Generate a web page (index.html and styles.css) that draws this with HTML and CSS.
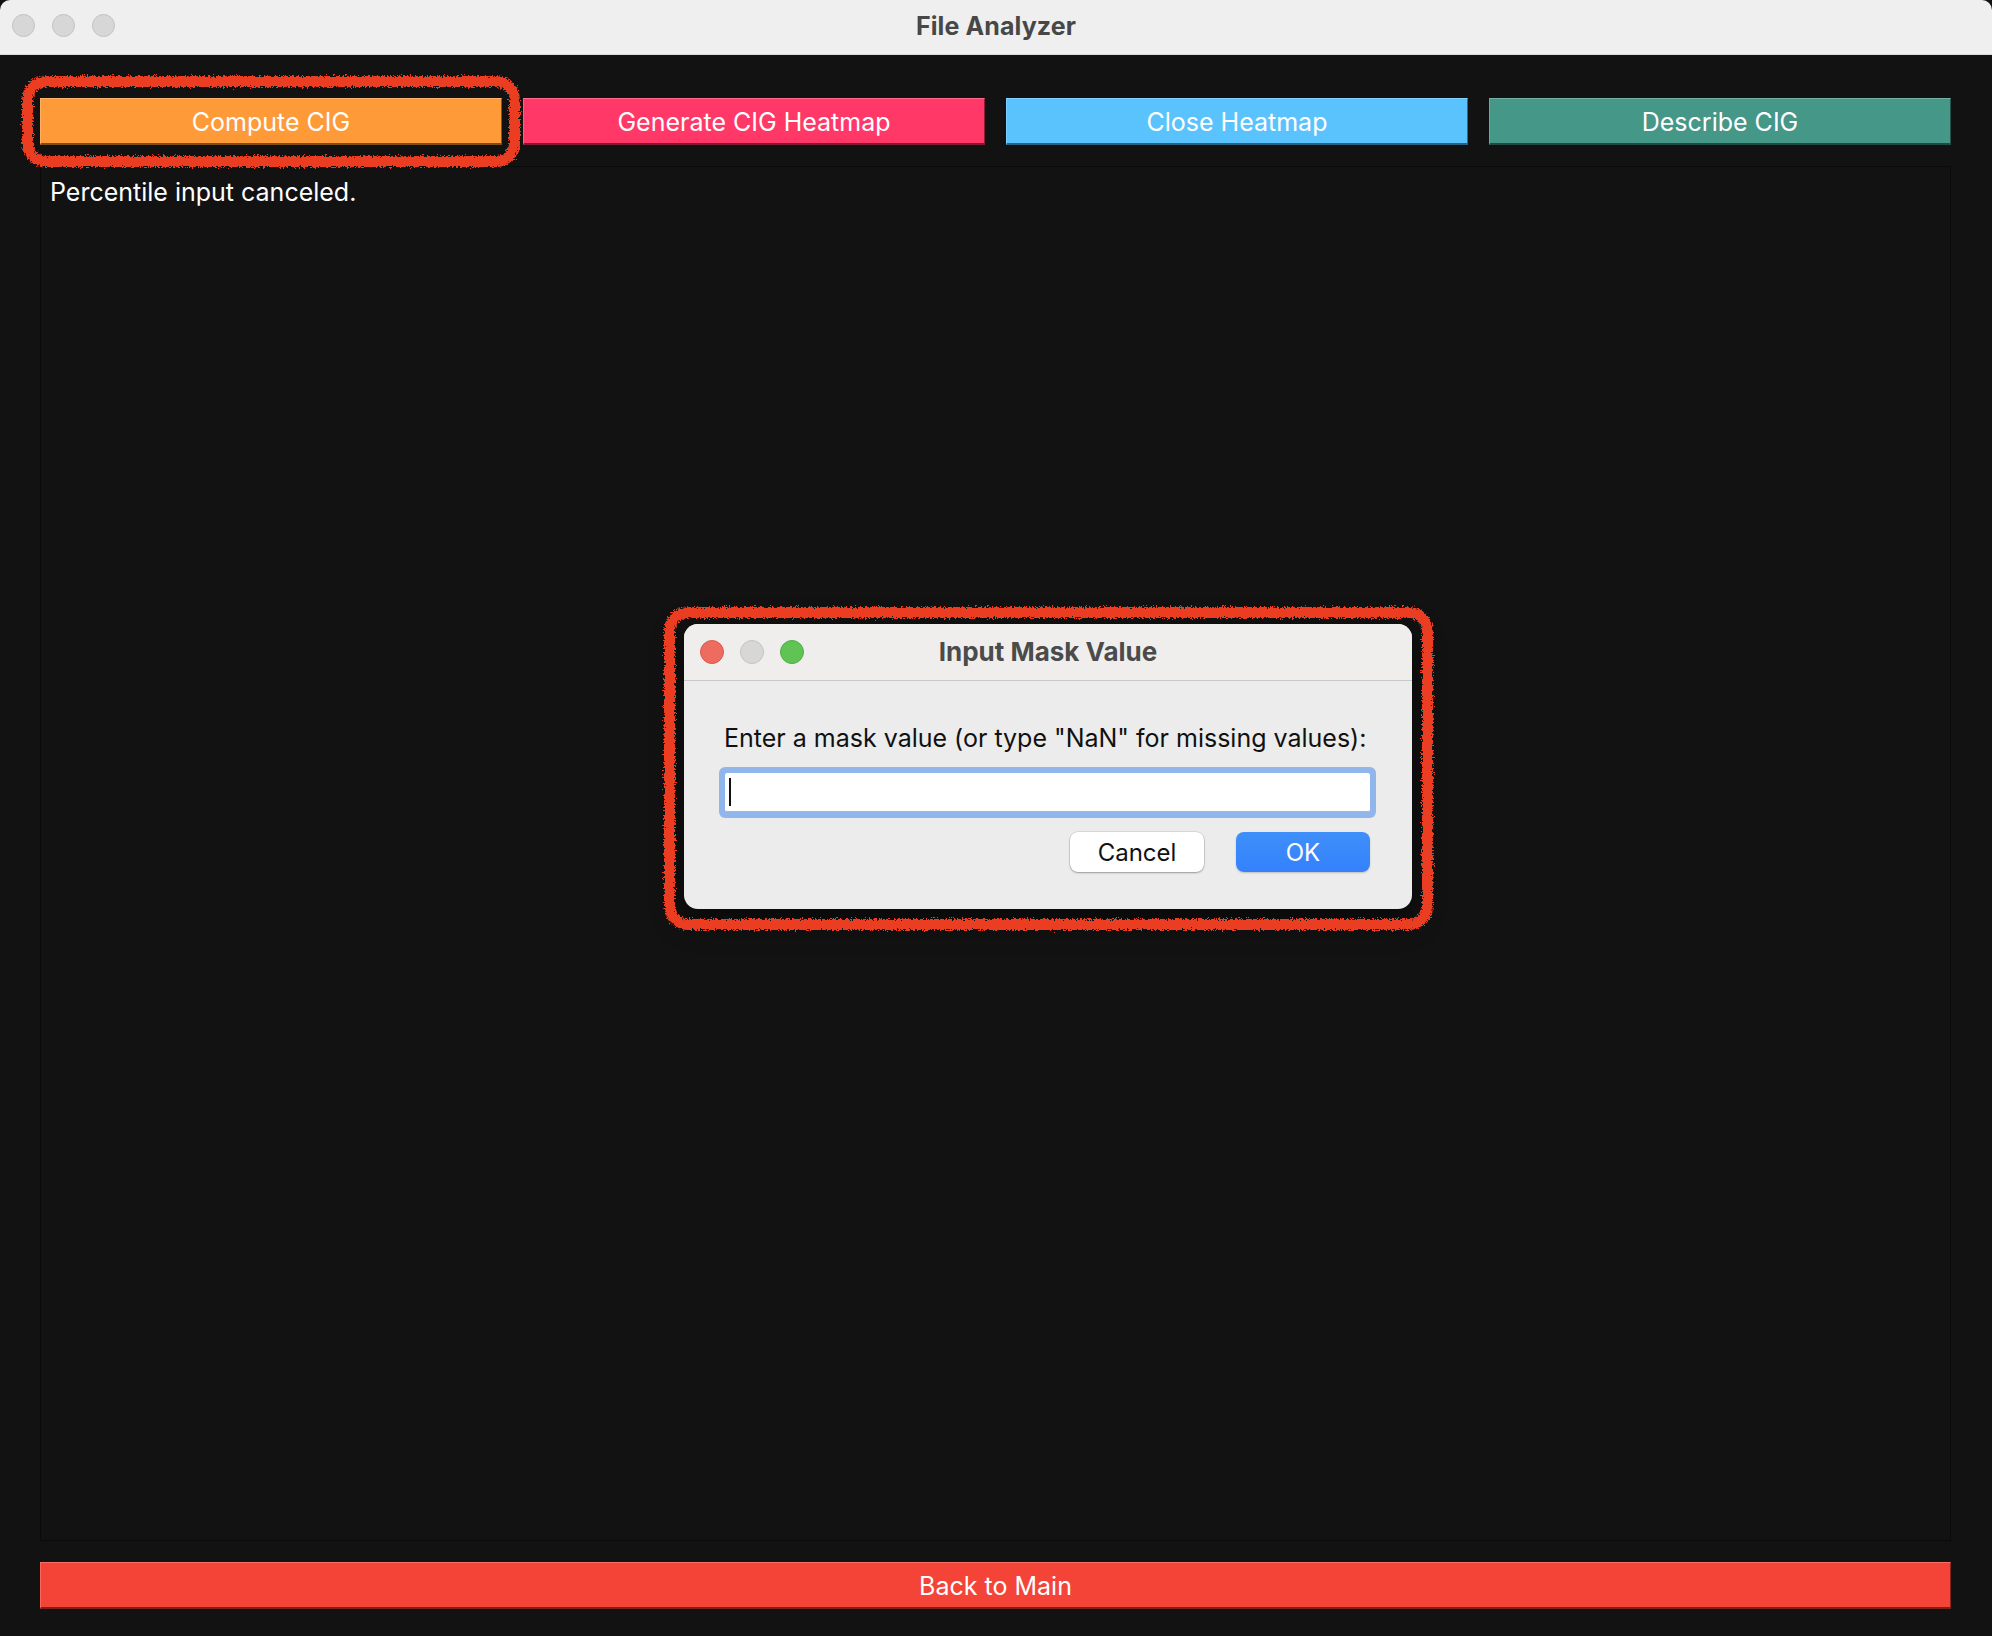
FILE: index.html
```html
<!DOCTYPE html>
<html lang="en">
<head>
<meta charset="utf-8">
<title>File Analyzer</title>
<link rel="stylesheet" href="styles.css">
</head>
<body>
<svg class="defs" width="0" height="0" aria-hidden="true">
  <filter id="rough" x="-10%" y="-10%" width="120%" height="120%">
    <feTurbulence type="fractalNoise" baseFrequency="0.6" numOctaves="2" seed="3" result="noise"/>
    <feDisplacementMap in="SourceGraphic" in2="noise" scale="7" xChannelSelector="R" yChannelSelector="G"/>
  </filter>
</svg>
<div class="window">
  <header class="titlebar">
    <div class="lights">
      <span class="light gray"></span>
      <span class="light gray"></span>
      <span class="light gray"></span>
    </div>
    <div class="title">File Analyzer</div>
  </header>
  <main class="content">
    <div class="toolbar">
      <button class="btn orange">Compute CIG</button>
      <button class="btn pink">Generate CIG Heatmap</button>
      <button class="btn sky">Close Heatmap</button>
      <button class="btn teal">Describe CIG</button>
    </div>
    <div class="panel">
      <p class="status">Percentile input canceled.</p>
    </div>
    <button class="btn back">Back to Main</button>
  </main>

  <div class="dialog">
    <div class="dlg-titlebar">
      <div class="lights dlg-lights">
        <span class="light red"></span>
        <span class="light gray"></span>
        <span class="light green"></span>
      </div>
      <div class="dlg-title">Input Mask Value</div>
    </div>
    <div class="dlg-body">
      <div class="dlg-label">Enter a mask value (or type "NaN" for missing values):</div>
      <div class="dlg-input"><span class="caret"></span></div>
      <div class="dlg-actions">
        <button class="mac-btn cancel">Cancel</button>
        <button class="mac-btn ok">OK</button>
      </div>
    </div>
  </div>

  <div class="annot annot-compute"></div>
  <div class="annot annot-dialog"></div>
</div>
</body>
</html>
```

FILE: styles.css
```css
* { box-sizing: border-box; }

html, body {
  margin: 0;
  padding: 0;
  background: #121212;
}

body {
  font-family: Inter, "Noto Sans", "Liberation Sans", sans-serif;
  width: 1992px;
  height: 1636px;
  overflow: hidden;
}

.defs { position: absolute; }

.window {
  position: relative;
  width: 1992px;
  height: 1636px;
  background: #121212;
  display: flex;
  flex-direction: column;
}

.titlebar {
  height: 55px;
  flex: none;
  background: #efefef;
  border-bottom: 1px solid #d9d9d9;
  border-radius: 10px 10px 0 0;
  display: flex;
  align-items: center;
  justify-content: center;
  position: relative;
}

.lights {
  position: absolute;
  left: 12px;
  top: 14px;
  display: flex;
  gap: 17px;
}

.light {
  width: 23px;
  height: 23px;
  border-radius: 50%;
  display: block;
}

.light.gray { background: #d7d7d7; border: 1px solid #c3c3c3; }
.light.red { background: #ee6b60; border: 1px solid #d65a50; }
.light.green { background: #5fc454; border: 1px solid #4fae45; }

.title {
  font-size: 25px;
  font-weight: 700;
  color: #474747;
  letter-spacing: 0.1px;
  padding-bottom: 3px;
}

.content {
  flex: 1;
  display: flex;
  flex-direction: column;
  padding: 43px 41px 27px 40px;
}

.toolbar {
  display: grid;
  grid-template-columns: repeat(4, 1fr);
  gap: 21px;
}

.btn {
  height: 47px;
  border: none;
  margin: 0;
  padding: 2px 0 0 0;
  font-family: inherit;
  font-size: 25px;
  color: #ffffff;
  display: flex;
  align-items: center;
  justify-content: center;
  border-top: 1px solid rgba(255,255,255,0.25);
  border-left: 1px solid rgba(255,255,255,0.2);
  border-right: 1px solid rgba(0,0,0,0.45);
  border-bottom: 2px solid rgba(0,0,0,0.5);
}

.orange { background: #ff9a38; }
.pink { background: #ff3868; }
.sky { background: #5ac3fe; }
.teal { background: #459788; }
.back { background: #f44337; margin-top: 21px; flex: none; }

.panel {
  flex: 1;
  margin-top: 21px;
  border: 1px solid #0a0a0a;
  background: #121212;
  padding: 10px 9px;
}

.status {
  margin: 0;
  color: #ffffff;
  font-size: 25px;
  line-height: 30px;
}

/* dialog */
.dialog {
  position: absolute;
  left: 684px;
  top: 624px;
  width: 728px;
  height: 285px;
  border-radius: 14px;
  background: #ececec;
  overflow: hidden;
  box-shadow: 0 10px 30px rgba(0,0,0,0.6);
}

.dlg-titlebar {
  height: 57px;
  background: #efeeed;
  border-bottom: 1px solid #c9c9c9;
  position: relative;
  display: flex;
  align-items: center;
  justify-content: center;
}

.dlg-lights {
  left: 16px;
  top: 16px;
  gap: 16px;
}

.dlg-lights .light { width: 24px; height: 24px; }

.dlg-title {
  font-size: 26px;
  font-weight: 700;
  color: #4b4b4b;
  padding-bottom: 2px;
}

.dlg-body {
  padding: 42px 40px 0 40px;
  display: flex;
  flex-direction: column;
}

.dlg-label {
  font-size: 25px;
  line-height: 30px;
  color: #111111;
  white-space: nowrap;
}

.dlg-input {
  margin: 20px 2px 0 1px;
  height: 39px;
  background: #ffffff;
  border-bottom: 1px solid #b5b5b5;
  box-shadow: 0 0 0 6px #91b6ec;
  border-radius: 2px;
  position: relative;
}

.caret {
  position: absolute;
  left: 4px;
  top: 5px;
  width: 2px;
  height: 28px;
  background: #111;
}

.dlg-actions {
  margin-top: 20px;
  margin-right: 2px;
  display: flex;
  justify-content: flex-end;
  gap: 32px;
}

.mac-btn {
  width: 134px;
  height: 40px;
  border-radius: 8px;
  border: none;
  font-family: inherit;
  font-size: 24px;
  padding: 0;
}

.cancel {
  background: #ffffff;
  color: #111;
  box-shadow: 0 1px 2px rgba(0,0,0,0.3), 0 0 0 0.5px rgba(0,0,0,0.15);
}

.ok {
  background: linear-gradient(#3f8ffb, #3481fa);
  color: #ffffff;
  box-shadow: 0 1px 2px rgba(0,0,0,0.2);
}

/* annotations */
.annot {
  position: absolute;
  border: 11px solid #ea3e24;
  filter: url(#rough);
  pointer-events: none;
}

.annot-compute {
  left: 22px;
  top: 76px;
  width: 498px;
  height: 91px;
  border-radius: 24px;
}

.annot-dialog {
  left: 664px;
  top: 607px;
  width: 769px;
  height: 323px;
  border-radius: 24px;
}
```
